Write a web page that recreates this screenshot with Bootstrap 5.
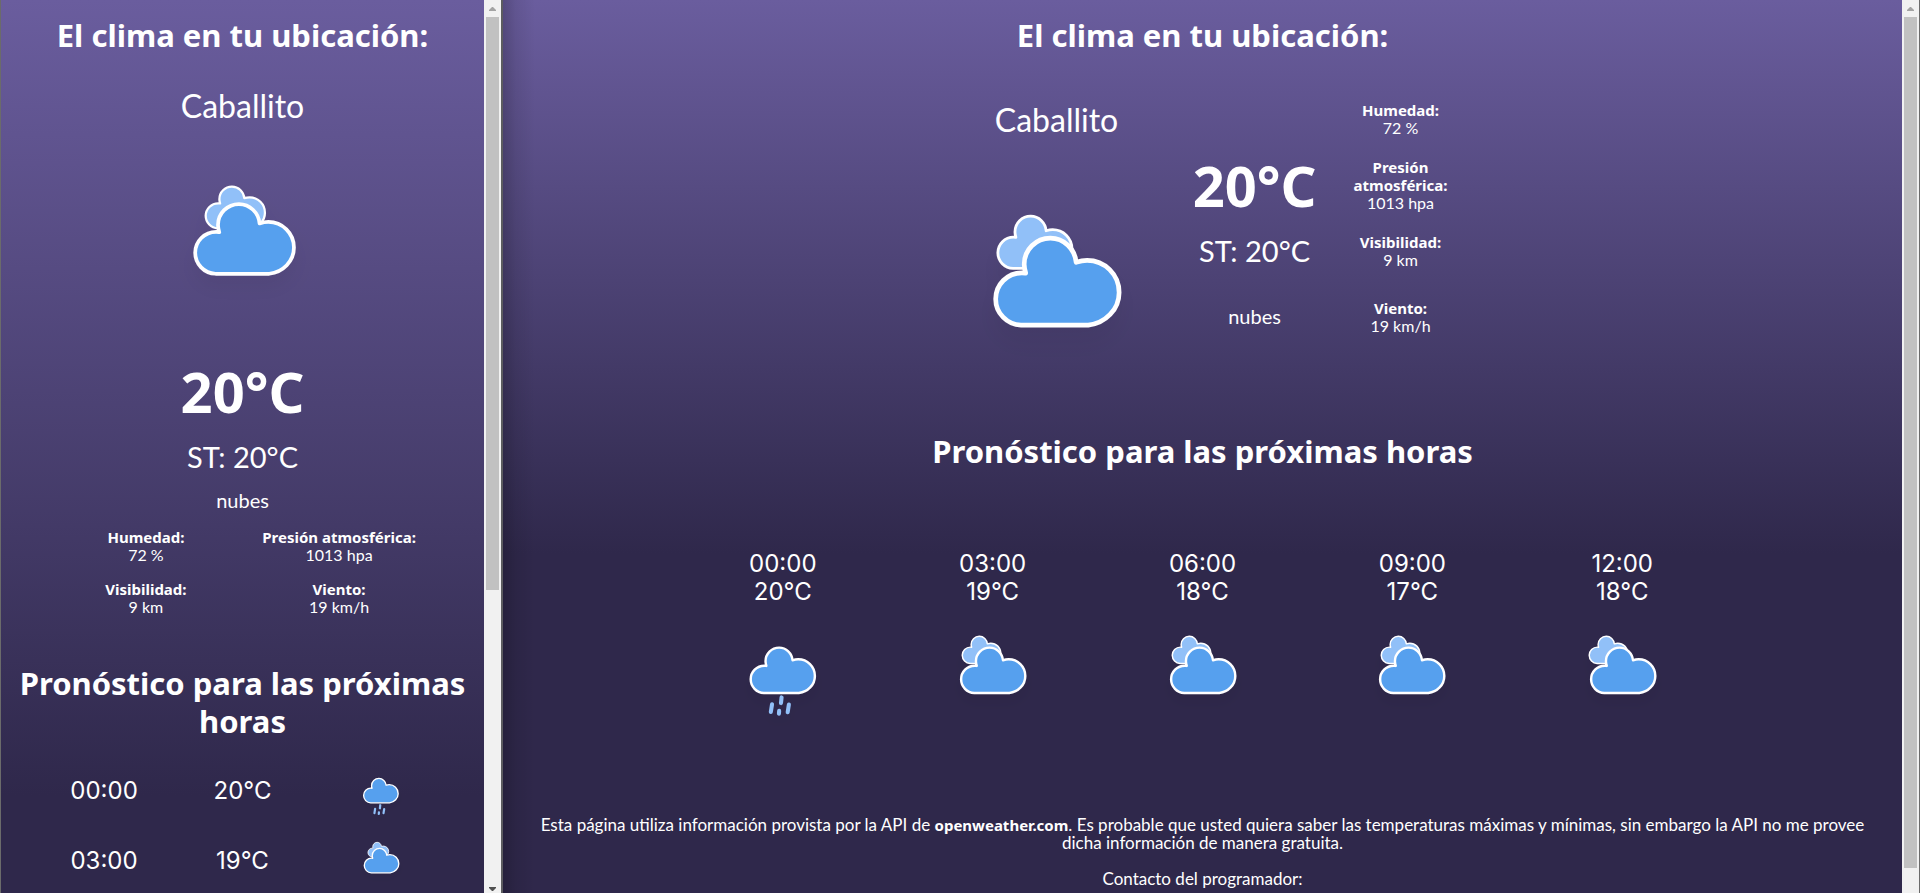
<!DOCTYPE html>
<html lang="es">
<head>
<meta charset="utf-8">
<meta name="viewport" content="width=device-width, initial-scale=1">
<title>El clima en tu ubicación</title>
<link rel="stylesheet" href="https://cdn.jsdelivr.net/npm/bootstrap@5.3.0/dist/css/bootstrap.min.css">
<style>
  :root { --top: #6a5d9e; --night: #2f284b; }
  body { font-family: Lato, "Noto Sans", sans-serif; font-size: 16px; line-height: 18px; color: #fff; background: var(--night); }
  h2, strong, .temp-now, .footnote a { font-family: "Noto Sans", sans-serif; font-weight: 700; }
  h2 { font-size: 31px; line-height: 38px; margin: 0; }
  strong, .footnote a { font-size: 15px; line-height: 18px; }
  .footnote a { color: inherit; text-decoration: none; }
  .city { font-size: 32px; line-height: 40px; }
  .temp-now { font-size: 56px; line-height: 70px; }
  .feels { font-size: 29px; line-height: 30px; }
  .sky { font-size: 20px; line-height: 24px; }
  .hour { font-family: Inter, sans-serif; font-size: 24px; line-height: 28px; }

  .pane-mobile { flex: 0 0 26.2%; border-left: 1px solid #6b6b6b; border-right: 2px solid #5c5c60; }
  .pane-desktop { border-right: 1px solid #6b6b6b; }
  .pane-mobile .screen { background: linear-gradient(var(--top), var(--night) 89%); }
  .pane-desktop .screen { background: linear-gradient(var(--top), var(--night) 62%); }
  .edge-shade { inset: 0 auto 0 0; width: 32px; background: linear-gradient(90deg, rgba(0, 0, 0, .2), rgba(0, 0, 0, .08) 40%, transparent); }

  .facts { width: 80%; row-gap: 16px; }
  .hours-table { width: 86%; table-layout: fixed; }
  .hours-table td { height: 70px; padding: 0; vertical-align: middle; }
  .hours-row { width: 75%; margin-top: 80px; }
  .now { margin-top: 46px; }
  .now-place { width: 250px; }
  .now-place .wx { margin-top: 18px; }
  .now-temp, .now-facts { width: 146px; }
  .now-temp { padding-top: 50px; }
  .now-temp .sky { margin-top: 38px; }
  .now-facts { gap: 21px; padding-top: 1px; }
  .now-facts .wind { margin-top: 9px; }
  .footnote { font-size: 17px; margin-top: 80px; }
  .footnote p { margin-bottom: 18px; }

  .wx { display: block; margin: 0 auto; overflow: visible; }
  .wx-xl { width: 250px; height: 250px; }
  .wx-lg { width: 200px; height: 200px; margin-top: 14px; }
  .wx-md { width: 130px; height: 130px; }
  .wx-sm { width: 70px; height: 70px; }

  .bar { width: 17px; background: #f1f1f1; }
  .bar svg { display: block; width: 17px; height: 17px; }
  .thumb { width: 13px; background: #c1c1c1; }
</style>
</head>
<body>
<svg width="0" height="0" class="position-absolute" aria-hidden="true">
  <defs>
    <filter id="soft" x="-30%" y="-30%" width="160%" height="180%">
      <feDropShadow dx="0" dy="4" stdDeviation="3" flood-color="#000" flood-opacity=".05"/>
    </filter>
    <path id="cloud" stroke="#fff" stroke-width="1.2" stroke-linejoin="round" d="M47.7,35.4c0,-4.6 -3.7,-8.2 -8.2,-8.2c-1,0 -1.9,0.2 -2.8,0.5c-0.3,-3.4 -3.1,-6.2 -6.6,-6.2c-3.7,0 -6.7,3 -6.7,6.7c0,0.8 0.2,1.6 0.4,2.3c-0.3,-0.1 -0.7,-0.1 -1,-0.1c-3.7,0 -6.7,3 -6.7,6.7c0,3.6 2.9,6.6 6.5,6.7l17.2,0c4.4,-0.5 7.9,-4 7.9,-8.4z"/>
    <g id="cloudy" filter="url(#soft)">
      <use href="#cloud" transform="translate(10.4,2) scale(.6)" fill="#91c0f8"/>
      <use href="#cloud" transform="translate(.6,-1)" fill="#57a0ee"/>
    </g>
    <g id="cloudy-drift" filter="url(#soft)">
      <use href="#cloud" transform="translate(7.2,2) scale(.6)" fill="#91c0f8"/>
      <use href="#cloud" transform="translate(.2,-1)" fill="#57a0ee"/>
    </g>
    <g id="cloudy-far" filter="url(#soft)">
      <use href="#cloud" transform="translate(6.2,2) scale(.6)" fill="#91c0f8"/>
      <use href="#cloud" transform="translate(.7,-1)" fill="#57a0ee"/>
    </g>
    <g id="rainy" filter="url(#soft)">
      <use href="#cloud" transform="translate(0,-1)" fill="#57a0ee"/>
      <path d="M26.6,48.4L26,52.2M31.3,45L31,47.8M30.1,51.6L30,53M34.9,48.5L34.3,52.3" fill="none" stroke="#91c0f8" stroke-width="2" stroke-linecap="round"/>
    </g>
  </defs>
</svg>

<div class="d-flex vh-100 overflow-hidden">

  <section class="pane-mobile d-flex overflow-hidden">
    <div class="screen flex-grow-1 overflow-hidden text-center pt-3">
      <h2>El clima en tu ubicación:</h2>
      <div class="city mt-3 pt-3">Caballito</div>
      <svg class="wx wx-lg" viewBox="0 0 64 64" role="img" aria-label="nubes"><use href="#cloudy"/></svg>
      <div class="temp-now mt-3">20°C</div>
      <div class="feels mt-3">ST: 20°C</div>
      <div class="sky mt-3">nubes</div>
      <div class="facts row row-cols-2 g-0 mx-auto mt-3">
        <div class="col"><strong class="d-block">Humedad:</strong>72 %</div>
        <div class="col"><strong class="d-block text-nowrap">Presión atmosférica:</strong>1013 hpa</div>
        <div class="col"><strong class="d-block">Visibilidad:</strong>9 km</div>
        <div class="col"><strong class="d-block">Viento:</strong>19 km/h</div>
      </div>
      <h2 class="mt-5">Pronóstico para las próximas horas</h2>
      <table class="hours-table mx-auto mt-3 hour">
        <tbody>
          <tr><td>00:00</td><td>20°C</td><td><svg class="wx wx-sm" viewBox="0 0 64 64" role="img" aria-label="lluvia"><use href="#rainy"/></svg></td></tr>
          <tr><td>03:00</td><td>19°C</td><td><svg class="wx wx-sm" viewBox="0 0 64 64" role="img" aria-label="nubes"><use href="#cloudy"/></svg></td></tr>
        </tbody>
      </table>
    </div>
    <div class="bar flex-shrink-0 d-flex flex-column align-items-center" aria-hidden="true">
      <svg class="flex-shrink-0" viewBox="0 0 17 17"><path d="M5 11h7v-1l-3-3h-1l-3 3z" fill="#a3a3a3"/></svg>
      <div class="thumb" style="height:64.2%"></div>
      <svg class="mt-auto flex-shrink-0" viewBox="0 0 17 17"><path d="M5 11h7v1l-3 3h-1l-3-3z" fill="#505050"/></svg>
    </div>
  </section>

  <section class="pane-desktop d-flex flex-grow-1 overflow-hidden position-relative">
    <div class="edge-shade position-absolute"></div>
    <div class="screen flex-grow-1 overflow-hidden text-center pt-3">
      <h2>El clima en tu ubicación:</h2>
      <div class="now d-flex justify-content-center">
        <div class="now-place">
          <div class="city">Caballito</div>
          <svg class="wx wx-xl" viewBox="0 0 64 64" role="img" aria-label="nubes"><use href="#cloudy-drift"/></svg>
        </div>
        <div class="now-temp">
          <div class="temp-now">20°C</div>
          <div class="feels mt-3">ST: 20°C</div>
          <div class="sky">nubes</div>
        </div>
        <div class="now-facts d-flex flex-column">
          <div><strong class="d-block">Humedad:</strong>72 %</div>
          <div><strong class="d-block">Presión<br>atmosférica:</strong>1013 hpa</div>
          <div><strong class="d-block">Visibilidad:</strong>9 km</div>
          <div class="wind"><strong class="d-block">Viento:</strong>19 km/h</div>
        </div>
      </div>
      <h2 class="mt-4">Pronóstico para las próximas horas</h2>
      <div class="hours-row row row-cols-5 g-0 mx-auto hour">
        <div class="col">00:00<br>20°C<svg class="wx wx-md" viewBox="0 0 64 64" role="img" aria-label="lluvia"><use href="#rainy"/></svg></div>
        <div class="col">03:00<br>19°C<svg class="wx wx-md" viewBox="0 0 64 64" role="img" aria-label="nubes"><use href="#cloudy-drift"/></svg></div>
        <div class="col">06:00<br>18°C<svg class="wx wx-md" viewBox="0 0 64 64" role="img" aria-label="nubes"><use href="#cloudy-drift"/></svg></div>
        <div class="col">09:00<br>17°C<svg class="wx wx-md" viewBox="0 0 64 64" role="img" aria-label="nubes"><use href="#cloudy-drift"/></svg></div>
        <div class="col">12:00<br>18°C<svg class="wx wx-md" viewBox="0 0 64 64" role="img" aria-label="nubes"><use href="#cloudy-far"/></svg></div>
      </div>
      <footer class="footnote px-4">
        <p>Esta página utiliza información provista por la API de <a href="https://openweather.com">openweather.com</a>. Es probable que usted quiera saber las temperaturas máximas y mínimas, sin embargo la API no me provee dicha información de manera gratuita.</p>
        <p>Contacto del programador:</p>
      </footer>
    </div>
    <div class="bar flex-shrink-0 d-flex flex-column align-items-center" aria-hidden="true">
      <svg class="flex-shrink-0" viewBox="0 0 17 17"><path d="M5 11h7v-1l-3-3h-1l-3 3z" fill="#a3a3a3"/></svg>
      <div class="thumb" style="height:95.3%"></div>
    </div>
  </section>

</div>
<script src="https://cdn.jsdelivr.net/npm/bootstrap@5.3.0/dist/js/bootstrap.bundle.min.js"></script>
</body>
</html>
